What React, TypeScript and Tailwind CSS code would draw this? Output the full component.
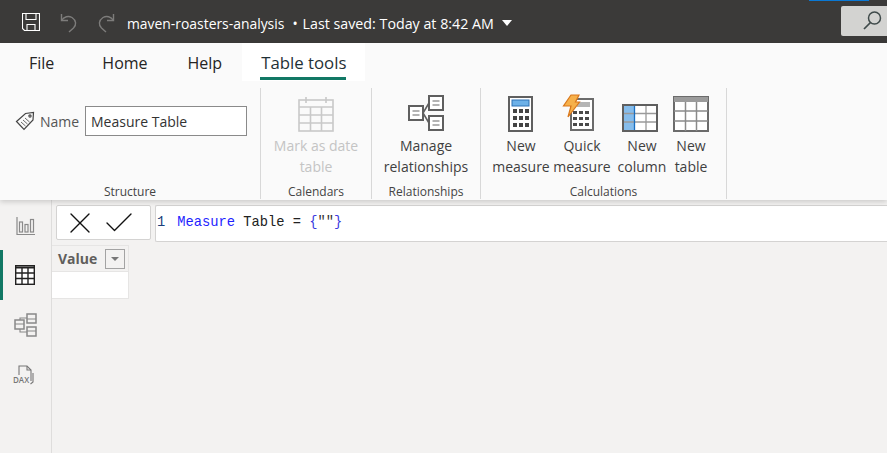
import { Check, X } from "lucide-react";

const uiFont = "font-['Open_Sans','Noto_Sans',sans-serif]";

function SaveIcon() {
  return (
    <svg width="18" height="18" viewBox="0 0 18 18" fill="none" stroke="#fff" strokeWidth="1.1">
      <path d="M0.5 0.5H17.5V17.5H2.5L0.5 15.5Z" />
      <path d="M4 0.5V6.5H14V0.5M5 17.5V11.5H13V17.5" />
    </svg>
  );
}

function UndoIcon({ flip }: { flip?: boolean }) {
  return (
    <svg width="18" height="20" viewBox="0 0 18 20" fill="none" stroke="#7d7c7b" strokeWidth="1.4" className={flip ? "-scale-x-100" : ""}>
      <path d="M1.5 1V7.5H8" />
      <path d="M1.5 7.5C4 3.5 8.5 2.5 12 4.5C16.5 7.5 16.5 12 13.5 15L9 19" />
    </svg>
  );
}

function TagIcon() {
  return (
    <svg width="20" height="20" viewBox="0 0 20 20" fill="none" stroke="#444" strokeWidth="1.2">
      <path d="M1.5 10.5L10.5 2.5L18.5 1.5L18 9L9 18.5Z" />
      <circle cx="15" cy="5" r="1.1" />
      <path d="M6 11L10.5 15M8 9L12.5 13M10 7L14.5 11" strokeWidth="0.8" />
    </svg>
  );
}

function CalendarIcon() {
  return (
    <svg width="36" height="36" viewBox="0 0 36 36" fill="none" stroke="#c9c9c9" strokeWidth="1.6">
      <rect x="1" y="4" width="34" height="31" />
      <path d="M1 11H35M1 19H35M1 27H35M12.5 11V35M23.5 11V35M8 1V7M28 1V7" />
    </svg>
  );
}

function RelationshipsIcon() {
  return (
    <svg width="37" height="37" viewBox="0 0 37 37" fill="none">
      <g stroke="#5f5f5f" strokeWidth="2" fill="#fff">
        <rect x="21" y="1" width="14" height="14" />
        <rect x="1" y="11" width="14" height="14" />
        <rect x="21" y="21" width="14" height="14" />
      </g>
      <path d="M21 8L15 18L21 28" stroke="#5f5f5f" strokeWidth="1.6" />
      <path d="M24.5 6H31.5M24.5 10H31.5M4.5 16H11.5M4.5 20H11.5M24.5 26H31.5M24.5 30H31.5" stroke="#9a9a9a" strokeWidth="1.5" />
    </svg>
  );
}

function CalcIcon() {
  const dots = [];
  for (const y of [13, 20, 27]) {
    for (const x of [5, 11, 17]) {
      dots.push(<rect key={`${x}-${y}`} x={x} y={y} width="4" height="4" fill="#444" />);
    }
  }
  return (
    <svg width="25" height="36" viewBox="0 0 25 36" fill="none" className="mr-[2px]">
      <rect x="1" y="1" width="23" height="34" fill="#fff" stroke="#5f5f5f" strokeWidth="2" />
      <rect x="4" y="4" width="17" height="6" fill="#6db1e8" stroke="#2f72b5" />
      {dots}
    </svg>
  );
}

function QuickIcon() {
  const dots = [];
  for (const y of [17, 23, 29]) {
    for (const x of [11, 17, 23]) {
      dots.push(<rect key={`${x}-${y}`} x={x} y={y} width="4" height="3" fill="#4a4a4a" />);
    }
  }
  return (
    <svg width="32" height="38" viewBox="0 0 32 38" fill="none" className="mr-[8px]">
      <rect x="9" y="5" width="22" height="31" fill="#fff" stroke="#6b6b6b" strokeWidth="2" />
      <rect x="15" y="8" width="13" height="5" fill="#b5b5b5" />
      {dots}
      <path d="M9 1H17L13.5 8H17.5L6 23L9 12H1.5Z" fill="#f6b04a" stroke="#d9771b" strokeWidth="1.2" />
    </svg>
  );
}

function ColumnIcon() {
  return (
    <svg width="36" height="28" viewBox="0 0 36 28" fill="none" className="mr-[4px]">
      <rect x="1" y="1" width="34" height="26" fill="#fff" />
      <rect x="1" y="1" width="11" height="26" fill="#86bdec" />
      <path d="M1 9.5H35M1 18H35M24 1V27" stroke="#9a9a9a" strokeWidth="1.3" />
      <path d="M12.5 1V27" stroke="#1a6fc0" strokeWidth="1.3" />
      <rect x="1" y="1" width="34" height="26" stroke="#5f5f5f" strokeWidth="2" />
    </svg>
  );
}

function TableIcon() {
  return (
    <svg width="36" height="36" viewBox="0 0 36 36" fill="none">
      <rect x="1" y="1" width="34" height="34" fill="#fff" stroke="#6b6b6b" strokeWidth="2" />
      <rect x="1" y="1" width="34" height="5" fill="#9b9b9b" />
      <path d="M1 15H35M1 25H35M12.5 6V35M23.5 6V35" stroke="#8a8a8a" strokeWidth="1.5" />
    </svg>
  );
}

function RibbonButton({ icon, lines, width, muted }: { icon: React.ReactNode; lines: string[]; width: string; muted?: boolean }) {
  return (
    <div className={`flex flex-col items-center ${width}`}>
      <div className="h-[44px] flex items-end justify-center">{icon}</div>
      <div className={`mt-[3px] text-[14px] leading-[21px] text-center whitespace-nowrap ${muted ? "text-[#c4c4c4]" : "text-[#3f3f3f]"}`}>
        {lines.map((l) => (
          <div key={l}>{l}</div>
        ))}
      </div>
    </div>
  );
}

function RibbonGroup({ label, width, children }: { label: string; width: string; children: React.ReactNode }) {
  return (
    <div className={`${width} h-[111px] shrink-0 border-r border-[#d8d8d8] flex flex-col`}>
      <div className="flex-1 flex justify-center">{children}</div>
      <div className="text-[12px] leading-[16px] mb-[-1px] text-center text-[#444]">{label}</div>
    </div>
  );
}

function RailIcons() {
  return (
    <div className="w-[52px] shrink-0 border-r border-[#dedddc] flex flex-col">
      <div className="h-[50px] flex items-center justify-center pt-[1px]">
        <svg width="20" height="20" viewBox="0 0 20 20" fill="none" stroke="#8a8a8a" strokeWidth="1.2">
          <path d="M1 1V18.5H19" />
          <rect x="3.5" y="6" width="3" height="10" />
          <rect x="9" y="8.5" width="3" height="7.5" />
          <rect x="14.5" y="3.5" width="3" height="12.5" />
        </svg>
      </div>
      <div className="h-[50px] flex items-center justify-center border-l-[3px] border-[#117865] pr-[4px]">
        <svg width="20" height="20" viewBox="0 0 20 20" fill="none" stroke="#222" strokeWidth="1.4">
          <rect x="0.7" y="0.7" width="18.6" height="18.6" fill="#fff" />
          <path d="M0.7 2.5H19.3" strokeWidth="2" />
          <path d="M0.7 8H19.3M0.7 13.5H19.3M7 3V19M13 3V19" />
        </svg>
      </div>
      <div className="h-[50px] flex items-center justify-center">
        <svg width="23" height="24" viewBox="0 0 23 24" fill="none" stroke="#888" strokeWidth="1.5">
          <rect x="1" y="7" width="9" height="9" />
          <rect x="13" y="1" width="9" height="9" />
          <rect x="13" y="14" width="9" height="9" />
          <path d="M13 5H6V7M6 16V19H13M13 6H22M13 18H22M1 11H10" strokeWidth="1.1" />
        </svg>
      </div>
      <div className="h-[50px] relative flex items-center justify-center">
        <svg width="18" height="20" viewBox="0 0 18 20" fill="none" stroke="#777" strokeWidth="1.1">
          <path d="M2 13V1H10L14 5V16" />
          <path d="M10 1V5H14M16 8V17L13.5 19" />
        </svg>
        <span className="absolute left-[13px] top-[25px] text-[8px] leading-[10px] font-semibold text-[#777] bg-[#f3f2f1]">DAX</span>
      </div>
    </div>
  );
}

export default function App() {
  return (
    <div className={`w-[887px] h-[453px] overflow-hidden flex flex-col bg-[#f3f2f1] ${uiFont}`}>
      <header className="h-[43px] shrink-0 bg-[#3b3a39] flex items-start relative">
        <div className="pl-[22px] pt-[13px]"><SaveIcon /></div>
        <div className="pl-[20px] pt-[13px]"><UndoIcon /></div>
        <div className="pl-[19px] pt-[13px]"><UndoIcon flip /></div>
        <div className="pl-[12px] pt-[14px] text-[13.9px] leading-[20px] text-white whitespace-nowrap">maven-roasters-analysis</div>
        <div className="pl-[8px] pt-[14px] text-[13.9px] leading-[20px] text-white whitespace-nowrap">•</div>
        <div className="pl-[5px] pt-[14px] text-[14.25px] leading-[20px] text-white whitespace-nowrap">Last saved: Today at 8:42 AM</div>
        <div className="ml-[8px] mt-[20px] w-0 h-0 border-x-[5.5px] border-x-transparent border-t-[6px] border-t-white" />
        <div className="absolute left-[809px] top-0 w-[60px] h-[1px] bg-[#0a78d4]" />
        <div className="absolute left-[841px] top-[6px] w-[46px] h-[30px] bg-[#d3d3d1] rounded-l-[2px] flex items-center pl-[20px]">
          <svg width="22" height="22" viewBox="0 0 22 22" fill="none" stroke="#3f4a4a" strokeWidth="1.5" className="shrink-0">
            <circle cx="13.5" cy="8" r="6" />
            <path d="M9.5 12.5L3 19" strokeWidth="1.7" />
          </svg>
        </div>
      </header>

      <div className="shrink-0 bg-[#fafafa] shadow-[0_2px_5px_rgba(0,0,0,0.16)] z-10">
        <nav className="h-[38px] flex text-[16px] text-[#252423]">
          <div className="ml-[29px] pt-[8px] leading-[24px]">File</div>
          <div className="ml-[48px] pt-[8px] leading-[24px]">Home</div>
          <div className="ml-[40px] pt-[8px] leading-[24px]">Help</div>
          <div className="ml-[20px] w-[123px] bg-white pl-[19px] pt-[8px] text-[16.8px] leading-[24px] relative font-medium text-[#1f3036] whitespace-nowrap">
            Table tools
            <div className="absolute left-[18px] top-[34px] w-[86px] h-[3px] bg-[#117865]" />
          </div>
        </nav>

        <section className="h-[119px] pt-[7px] flex">
          <RibbonGroup label="Structure" width="w-[261px]">
            <div className="flex items-start w-full pl-[15px]">
              <div className="pt-[23px]"><TagIcon /></div>
              <span className="ml-[5px] w-[45px] pt-[19px] text-[14px] leading-[30px] text-[#555]">Name</span>
              <div className="mt-[18px] w-[162px] h-[30px] border border-[#8a8a8a] bg-white px-[5px] text-[14px] leading-[30px] text-[#333]">Measure Table</div>
            </div>
          </RibbonGroup>
          <RibbonGroup label="Calendars" width="w-[111px]">
            <RibbonButton muted icon={<CalendarIcon />} lines={["Mark as date", "table"]} width="w-[100px]" />
          </RibbonGroup>
          <RibbonGroup label="Relationships" width="w-[109px]">
            <RibbonButton icon={<RelationshipsIcon />} lines={["Manage", "relationships"]} width="w-[100px]" />
          </RibbonGroup>
          <RibbonGroup label="Calculations" width="w-[246px]">
            <div className="flex w-full pl-[10px]">
              <RibbonButton icon={<CalcIcon />} lines={["New", "measure"]} width="w-[60px]" />
              <RibbonButton icon={<QuickIcon />} lines={["Quick", "measure"]} width="w-[62px]" />
              <RibbonButton icon={<ColumnIcon />} lines={["New", "column"]} width="w-[58px]" />
              <RibbonButton icon={<TableIcon />} lines={["New", "table"]} width="w-[40px]" />
            </div>
          </RibbonGroup>
        </section>
      </div>

      <main className="flex-1 flex min-h-0">
        <RailIcons />
        <div className="flex-1 min-w-0">
          <div className="pt-[5px] flex items-start">
            <div className="ml-[4px] w-[95px] h-[35px] bg-white border border-[#d4d3d2] rounded-[2px] flex items-center pl-[5px] gap-[3px]">
              <X size={36} strokeWidth={0.9} color="#111" className="shrink-0" />
              <Check size={36} strokeWidth={0.9} color="#111" className="shrink-0" />
            </div>
            <div className="ml-[4px] flex-1 h-[37px] bg-white border border-r-0 border-[#d4d3d2] rounded-l-[2px] flex items-center pl-[1px] font-['Liberation_Mono',monospace] text-[13.75px] whitespace-pre">
              <span className="text-[#1d3f7a]">1</span>
              <span className="ml-[12px] text-[#1f1fff]">Measure</span>
              <span className="text-[#222]"> Table = </span>
              <span className="text-[#3a3ae0]">{"{"}</span>
              <span className="text-[#333]">{'""'}</span>
              <span className="text-[#3a3ae0]">{"}"}</span>
            </div>
          </div>
          <div className="mt-[3px] w-[77px] h-[54px] flex flex-col">
            <div className="h-[27px] border border-l-0 border-[#e6e5e4] flex items-center pl-[6px] pr-[3px] justify-between">
              <span className="text-[14px] leading-[18px] font-bold text-[#605e5c]">Value</span>
              <div className="w-[20px] h-[20px] border border-[#a3a3a3] flex items-center justify-center">
                <div className="w-0 h-0 border-x-[4px] border-x-transparent border-t-[4px] border-t-[#777]" />
              </div>
            </div>
            <div className="h-[27px] bg-white border border-l-0 border-[#e6e5e4] border-t-0" />
          </div>
        </div>
      </main>
    </div>
  );
}
